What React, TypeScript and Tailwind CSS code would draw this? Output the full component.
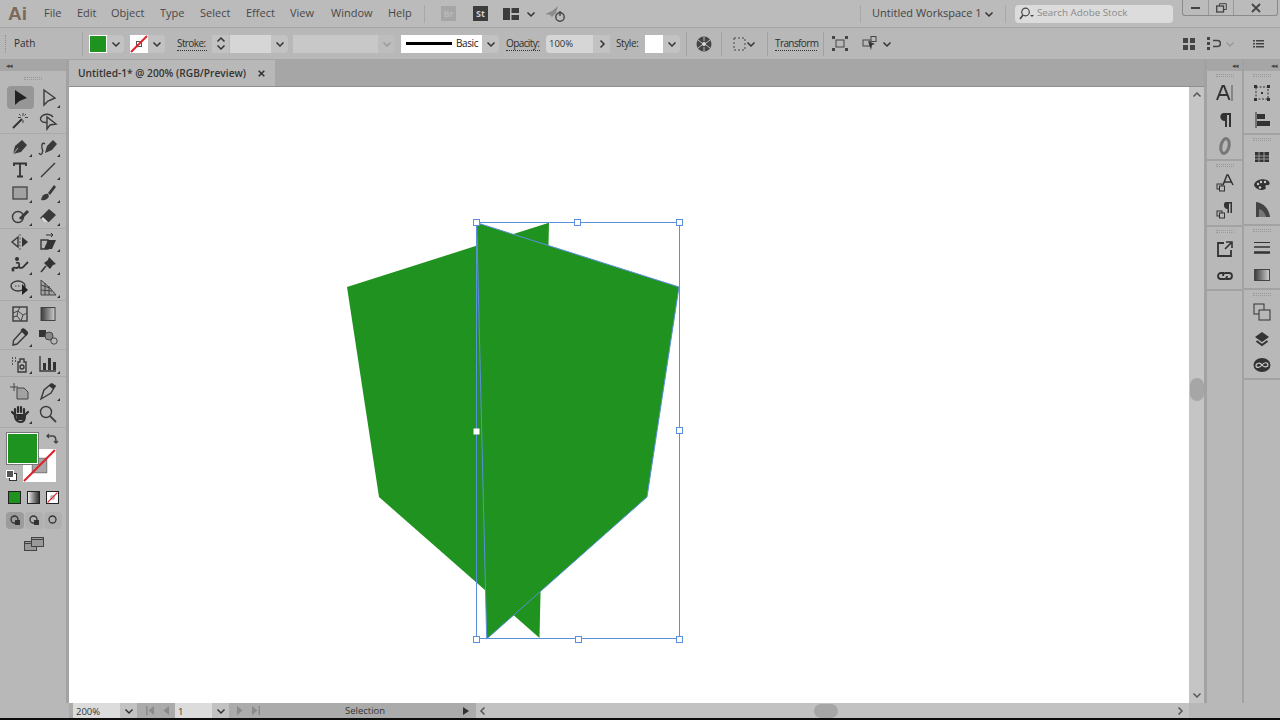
import type { ReactNode } from "react";

const ink = "#3a3a3a";

function Chevron({ dir = "down", color = "#333" }: { dir?: "down" | "up" | "left" | "right"; color?: string }) {
  const d = {
    down: "M1.5 3.5 L5 7 L8.5 3.5",
    up: "M1.5 6.5 L5 3 L8.5 6.5",
    left: "M6.5 1.5 L3 5 L6.5 8.5",
    right: "M3.5 1.5 L7 5 L3.5 8.5",
  }[dir];
  return (
    <svg width="10" height="10" viewBox="0 0 10 10" fill="none">
      <path d={d} stroke={color} strokeWidth="1.5" />
    </svg>
  );
}

function DropBtn({ w = "w-[17px]" }: { w?: string }) {
  return (
    <div className={`${w} h-[18px] bg-[#c2c2c2] rounded-r-sm flex items-center justify-center`}>
      <Chevron />
    </div>
  );
}

function Sep({ ml, mr }: { ml: string; mr: string }) {
  return <div className={`w-px h-[24px] bg-[#a2a2a2] ${ml} ${mr}`} />;
}

function Label({ children, className }: { children: ReactNode; className: string }) {
  return (
    <span className={`text-[10px] tracking-[-0.6px] whitespace-nowrap min-w-0 text-[#2e2e2e] border-b border-dotted border-[#333] leading-[13px] ${className}`}>
      {children}
    </span>
  );
}

function NoStroke({ size = 18 }: { size?: number }) {
  return (
    <svg width={size} height={size} viewBox="0 0 18 18">
      <rect width="18" height="18" fill="#fff" />
      <rect x="6.5" y="6.5" width="5" height="5" fill="none" stroke="#555" />
      <path d="M1 17 L17 1" stroke="#e0202a" strokeWidth="2" />
    </svg>
  );
}

function MenuBar() {
  const items = [
    ["File", "w-[33px]"],
    ["Edit", "w-[34px]"],
    ["Object", "w-[49px]"],
    ["Type", "w-[40px]"],
    ["Select", "w-[46px]"],
    ["Effect", "w-[44px]"],
    ["View", "w-[41px]"],
    ["Window", "w-[57px]"],
    ["Help", "w-[36px]"],
  ];
  return (
    <div className="h-[27px] bg-[#bbbbbb] flex items-center shrink-0">
      <span className="w-[44px] pl-[8px] text-[19px] font-bold text-[#7b6a58] font-['Liberation_Sans',sans-serif] leading-none">Ai</span>
      {items.map(([label, w]) => (
        <span key={label} className={`${w} text-[11px] text-[#484848] -mt-[1px]`}>{label}</span>
      ))}
      <div className="w-px h-[18px] bg-[#a8a8a8]" />
      <div className="w-[15px] h-[15px] ml-[16px] bg-[#a6a6a6] text-[#b8b8b8] text-[9px] font-bold flex items-center justify-center">Br</div>
      <div className="w-[15px] h-[15px] ml-[17px] bg-[#3c3c3c] text-[#d0d0d0] text-[9px] font-bold flex items-center justify-center">St</div>
      <svg className="ml-[15px]" width="16" height="12" viewBox="0 0 16 12">
        <path d="M0 0H7V12H0Z M8.500 0H16V5H8.500Z M8.500 7H16V12H8.500Z" fill="#3c3c3c" />
      </svg>
      <div className="ml-[7px]"><Chevron /></div>
      <svg className="ml-[9px]" width="21" height="18" viewBox="0 0 21 18" fill="none">
        <path d="M0 9 L7 6 L13 1 L11 8 L7 12 L5 10Z" fill="#8c8c8c" />
        <circle cx="15" cy="12" r="4.200" stroke="#444" strokeWidth="1.400" />
        <path d="M15 6 V11" stroke="#444" strokeWidth="1.400" />
      </svg>
      <div className="w-px h-[18px] bg-[#a8a8a8] ml-[294px]" />
      <span className="ml-[11px] w-[105px] text-[11px] text-[#444] whitespace-nowrap">Untitled Workspace 1</span>
      <div className="ml-[7px]"><Chevron /></div>
      <div className="w-px h-[18px] bg-[#a8a8a8] ml-[11px]" />
      <div className="ml-[9px] w-[158px] h-[18px] bg-[#dcdcdc] rounded-sm flex items-center pl-[4px] gap-[1px]">
        <svg width="15" height="13" viewBox="0 0 15 13" fill="none">
          <circle cx="6.500" cy="5" r="3.800" stroke="#444" strokeWidth="1.200" />
          <path d="M4 8 L1 12" stroke="#444" strokeWidth="1.500" />
          <path d="M11 8 H15 L13 10Z" fill="#444" />
        </svg>
        <span className="text-[9.800px] text-[#8a8a8a] whitespace-nowrap ml-[2px]">Search Adobe Stock</span>
      </div>
      <div className="ml-[9px] self-start w-[96px] h-[16px] border border-t-0 border-[#8a8a8a] rounded-b-[3px] flex">
        <div className="w-[26px] flex items-center justify-center border-r border-[#9a9a9a]">
          <div className="w-[9px] h-[2px] bg-[#444]" />
        </div>
        <div className="w-[25px] flex items-center justify-center border-r border-[#9a9a9a]">
          <svg width="11" height="10" viewBox="0 0 11 10" fill="none">
            <path d="M3.500 3V.7H10.300V6.500H7.500" stroke="#444" />
            <rect x=".7" y="3" width="6.800" height="6" stroke="#444" strokeWidth="1.300" />
          </svg>
        </div>
        <div className="flex-1 flex items-center justify-center">
          <svg width="10" height="10" viewBox="0 0 10 10">
            <path d="M1 1 L9 9 M9 1 L1 9" stroke="#444" strokeWidth="1.800" />
          </svg>
        </div>
      </div>
    </div>
  );
}

function ControlBar() {
  return (
    <div className="h-[33px] bg-[#b8b8b8] border-t border-b border-[#a4a4a4] flex items-center shrink-0">
      <div className="ml-[5px] w-px h-[18px] border-l border-dotted border-[#8e8e8e]" />
      <span className="ml-[8px] w-[68px] text-[10px] text-[#2e2e2e]">Path</span>
      <div className="w-px h-[24px] bg-[#a2a2a2]" />
      <div className="ml-[6px] w-[18px] h-[18px] bg-[#1e9320] border border-white" />
      <DropBtn />
      <div className="ml-[6px]"><NoStroke /></div>
      <DropBtn />
      <Label className="ml-[12px] w-[30px]">Stroke:</Label>
      <div className="ml-[5px] w-[17px] h-[18px] bg-[#c2c2c2] flex flex-col items-center justify-center -space-y-[3px]">
        <Chevron dir="up" />
        <Chevron />
      </div>
      <div className="ml-[1px] w-[41px] h-[18px] bg-[#d6d6d6]" />
      <DropBtn />
      <div className="ml-[5px] w-[85px] h-[18px] bg-[#c8c8c8]" />
      <div className="w-[17px] h-[18px] bg-[#bdbdbd] flex items-center justify-center">
        <Chevron color="#999" />
      </div>
      <div className="ml-[6px] w-[81px] h-[18px] bg-white flex items-center pl-[5px]">
        <div className="w-[46px] h-[3px] bg-black shrink-0" />
        <span className="ml-[4px] text-[10px] tracking-[-0.4px] text-[#222]">Basic</span>
      </div>
      <DropBtn />
      <Label className="ml-[7px] w-[34px]">Opacity:</Label>
      <div className="ml-[6px] w-[47px] h-[18px] bg-[#d6d6d6] rounded-l-sm text-[9.500px] text-[#333] pl-[3px] leading-[18px]">100%</div>
      <div className="w-[17px] h-[18px] bg-[#c2c2c2] flex items-center justify-center"><Chevron dir="right" /></div>
      <span className="ml-[6px] w-[23px] text-[10px] tracking-[-0.4px] text-[#2e2e2e]">Style:</span>
      <div className="ml-[6px] w-[18px] h-[18px] bg-white" />
      <DropBtn />
      <Sep ml="ml-[6px]" mr="mr-[9px]" />
      <svg width="16" height="16" viewBox="0 0 16 16">
        <circle cx="8" cy="8" r="7.500" fill="#444" />
        <circle cx="8" cy="8" r="2" fill="#ddd" />
        <path d="M8 1V5 M8 11V15 M2 4L6 7 M10 9L14 12 M14 4L10 7 M6 9L2 12" stroke="#bbb" />
      </svg>
      <Sep ml="ml-[9px]" mr="mr-[11px]" />
      <svg width="13" height="14" viewBox="0 0 13 14" fill="none">
        <rect x="1" y="1" width="11" height="12" stroke="#444" strokeDasharray="2 2" />
        <path d="M6.500 6.500h.01" stroke="#444" strokeWidth="2" />
      </svg>
      <Chevron />
      <Sep ml="ml-[11px]" mr="mr-[7px]" />
      <Label className="w-[42px]">Transform</Label>
      <Sep ml="ml-[6px]" mr="mr-[8px]" />
      <svg width="16" height="15" viewBox="0 0 16 15" fill="none">
        <rect x="4" y="4" width="8" height="7" stroke="#444" />
        <path d="M0 0H3V3H0Z M13 0H16V3H13Z M0 12H3V15H0Z M13 12H16V15H13Z" fill="#444" />
      </svg>
      <svg className="ml-[14px]" width="16" height="15" viewBox="0 0 16 15" fill="none">
        <rect x="1" y="4" width="7" height="6" stroke="#444" />
        <rect x="9" y="0.500" width="5" height="5" stroke="#444" />
        <path d="M6 5 L13 8 L10 9 L9 14Z" fill="#333" />
      </svg>
      <div className="ml-[4px]"><Chevron /></div>
      <svg className="ml-[291px]" width="12" height="12" viewBox="0 0 12 12">
        <path d="M0 0H5V5H0Z M7 0H12V5H7Z M0 7H5V12H0Z M7 7H12V12H7Z" fill="#444" />
      </svg>
      <svg className="ml-[12px]" width="14" height="13" viewBox="0 0 14 13" fill="none">
        <path d="M0 0H3V3H0Z M0 5H3V8H0Z M0 10H3V13H0Z" fill="#444" />
        <path d="M6 3.500H10.500A3 3 0 0 1 10.500 9.500H6" stroke="#444" strokeWidth="1.600" />
      </svg>
      <div className="ml-[4px]"><Chevron color="#999" /></div>
      <svg className="ml-[18px]" width="11" height="8" viewBox="0 0 11 8">
        <path d="M0 0H2V1.500H0Z M3 0H11V1.500H3Z M0 3H2V4.500H0Z M3 3H11V4.500H3Z M0 6H2V7.500H0Z M3 6H11V7.500H3Z" fill="#444" />
      </svg>
    </div>
  );
}

function Slot({ children, fly = false }: { children: ReactNode; fly?: boolean }) {
  return (
    <div className="relative w-[24px] h-[23px] flex items-center justify-center">
      <svg width="20" height="20" viewBox="0 0 20 20" fill="none">{children}</svg>
      {fly && <span className="absolute right-[0px] bottom-[1px] w-0 h-0 border-l-[3px] border-l-transparent border-b-[3px] border-b-[#333]" />}
    </div>
  );
}

function Tools() {
  const s = { stroke: ink, strokeWidth: 1.4 };
  return (
    <div className="w-[66px] h-full bg-[#b8b8b8] border-r-[3px] border-[#a2a2a2] shrink-0 box-content flex flex-col">
      <div className="h-[11px] bg-[#a6a6a6] flex items-center pl-[6px] text-[7px] text-[#444] leading-none tracking-[-1px]">◂◂</div>
      <div className="h-[15px] flex items-center justify-center">
        <div className="w-[18px] h-[3px] border-y border-dotted border-[#999]" />
      </div>
      <div className="pl-[6px] border-b border-[#aaa] pb-[1px] grid grid-cols-[28px_24px] justify-items-center gap-x-[2px]">
        <div className="relative w-[27px] h-[23px] bg-[#969696] rounded-sm flex items-center justify-center">
          <svg width="20" height="20" viewBox="0 0 20 20"><path d="M5 2 V17 L9.500 13 L17 10Z" fill="#222" /></svg>
        </div>
        <Slot fly><path d="M6 2 V17 L10 13 L17 10Z" {...s} /></Slot>
        <Slot>
          <path d="M3 17 L12 8" stroke="#333" strokeWidth="2" />
          <path d="M13 2v3 M13 9v3 M8 6.500h3 M15 6.500h3 M9 3l1.500 1.500 M16 3l-1.500 1.500" stroke="#444" />
        </Slot>
        <Slot>
          <path d="M11 11 C3 13 1 8 4 5 C7 2 13 3 15 6" {...s} />
          <path d="M9 6 V18 L12 14 L18 13Z" fill="#b8b8b8" {...s} />
        </Slot>
      </div>
      <div className="pl-[6px] pt-[1px] border-b border-[#aaa] pb-[1px] grid grid-cols-[28px_24px] justify-items-center gap-x-[2px]">
        <Slot fly>
          <path d="M3 17 L5 9 L12 3 L17 8 L11 15Z" fill="#3a3a3a" />
          <path d="M3 17 L8 11" stroke="#b8b8b8" />
        </Slot>
        <Slot fly>
          <path d="M1 16 C3 20 6 15 4 11 C3 7 5 5 7 7" {...s} />
          <path d="M7 16 L9 9 L15 3 L19 7 L14 13Z" fill="#3a3a3a" />
        </Slot>
        <Slot fly>
          <path d="M4 6 V3.500 H16 V6 M10 3.500 V16.500 M7 16.500 H13" stroke="#333" strokeWidth="1.800" />
        </Slot>
        <Slot fly><path d="M3 17 L17 3" {...s} /></Slot>
        <Slot fly><rect x="3" y="4" width="14" height="12" fill="#a2a2a2" stroke="#444" strokeWidth="1.300" /></Slot>
        <Slot fly>
          <path d="M10 10 L16 2 L18 4 L12 12Z" fill="#3a3a3a" />
          <path d="M3 17 C4 12 7 10 10 11 L11 13 C10 16 7 18 3 17Z" fill="#3a3a3a" />
        </Slot>
        <Slot fly>
          <circle cx="8" cy="11" r="5.500" {...s} />
          <path d="M10 13 L18 5" stroke="#3a3a3a" strokeWidth="3" />
        </Slot>
        <Slot fly>
          <path d="M2 12 L11 3 L18 9 L11 16 H6Z" fill="#3a3a3a" />
          <path d="M5 11 L10 16 L6 16 L3 13Z" fill="#ddd" />
        </Slot>
      </div>
      <div className="pl-[6px] pt-[1px] border-b border-[#aaa] pb-[1px] grid grid-cols-[28px_24px] justify-items-center gap-x-[2px]">
        <Slot>
          <path d="M8 5 L2 10 L8 15Z" {...s} />
          <path d="M12 5 L18 10 L12 15Z" fill="#333" />
          <path d="M10 2 V18" stroke="#555" strokeDasharray="2 1.500" />
        </Slot>
        <Slot fly>
          <path d="M3 8 H10 V17 H3Z" {...s} />
          <path d="M6 17 L10 8 H18 L14 17Z" fill="#333" />
          <path d="M8 3 H15 M13 1 L15 3 L13 5" stroke="#333" />
        </Slot>
        <Slot fly>
          <path d="M2 14 C5 10 7 16 9 11 C10 8 8 7 6 8 M9 12 C12 15 15 10 18 7" stroke="#333" strokeWidth="1.800" />
          <circle cx="3" cy="15" r="1.500" fill="#333" />
          <circle cx="7" cy="4" r="2" fill="#333" />
        </Slot>
        <Slot fly>
          <path d="M11 2 L18 9 L15 10 L12 14 L6 8 L10 5Z" fill="#333" />
          <path d="M8 11 L3 17" stroke="#333" strokeWidth="1.500" />
        </Slot>
        <Slot fly>
          <ellipse cx="8" cy="8" rx="7" ry="5" {...s} />
          <path d="M5 8h6" stroke="#444" strokeDasharray="1.500 1.500" />
          <path d="M12 6 V17 L18 12Z" fill="#222" />
        </Slot>
        <Slot fly>
          <path d="M3 2 V17 H18 L12 10 L3 2Z" fill="#a2a2a2" stroke="#444" />
          <path d="M3 7 L12 10 M3 12 L14 13 M7 5 V17 M11 8 V17" stroke="#444" />
        </Slot>
      </div>
      <div className="pl-[6px] pt-[1px] border-b border-[#aaa] pb-[1px] grid grid-cols-[28px_24px] justify-items-center gap-x-[2px]">
        <Slot>
          <rect x="3" y="3" width="14" height="14" {...s} />
          <path d="M3 9 L8 7 L10 3 M8 7 L13 11 L17 9 M13 11 L11 17 M3 13 L7 12 L11 17 M7 12 L8 7" stroke="#444" />
        </Slot>
        <Slot>
          <defs>
            <linearGradient id="toolgrad" x1="0" x2="1" y1="0" y2="0">
              <stop offset="0" stopColor="#3a3a3a" />
              <stop offset="1" stopColor="#cfcfcf" />
            </linearGradient>
          </defs>
          <rect x="3" y="3.500" width="14" height="13" fill="url(#toolgrad)" stroke="#444" />
        </Slot>
        <Slot fly>
          <path d="M12 4 L16 8 L7 17 L3 18 L3.500 13.500Z" {...s} />
          <path d="M10.500 3 L13 1 L15 2 L18 5 L18 7 L16 9Z" fill="#333" />
        </Slot>
        <Slot>
          <rect x="1" y="3" width="7" height="7" fill="#333" />
          <circle cx="11" cy="9" r="4" fill="#888" stroke="#444" />
          <circle cx="16" cy="14" r="3.200" fill="#b8b8b8" stroke="#444" />
        </Slot>
      </div>
      <div className="pl-[6px] pt-[2px] border-b border-[#aaa] pb-[1px] grid grid-cols-[28px_24px] justify-items-center gap-x-[2px]">
        <Slot fly>
          <path d="M8 8 H10 V5 H14 V8 H16 V18 H8Z" {...s} />
          <circle cx="12" cy="13" r="2" {...s} />
          <path d="M2 4h1 M5 4h1 M2 7h1 M5 7h1 M2 10h1" stroke="#333" strokeWidth="1.500" />
        </Slot>
        <Slot fly>
          <path d="M2 2 V17 H18" {...s} />
          <path d="M5 9H8V16H5Z M10 4H13V16H10Z M15 8H18V16H15Z" fill="#333" />
        </Slot>
      </div>
      <div className="pl-[6px] pt-[2px] border-b border-[#aaa] pb-[2px] grid grid-cols-[28px_24px] justify-items-center gap-x-[2px]">
        <Slot>
          <path d="M7 7 H14 L18 11 V18 H7Z" fill="#a2a2a2" stroke="#444" />
          <path d="M4 2 V10 M0 6 H8" stroke="#444" />
        </Slot>
        <Slot fly>
          <path d="M3 18 L6 9 L13 3 L17 5 L13 12 L8 15Z" {...s} />
          <path d="M11 5 L14 2 L18 5 L15 8Z" fill="#333" />
        </Slot>
        <Slot fly>
          <path d="M5 9 V5 M8 8 V3 M11 8 V3 M14 9 V5 M5 9 V13 C6 17 9 18 11 18 C14 18 15 15 15 11 M15 11 L18 8 M5 11 L2 8" stroke="#2e2e2e" strokeWidth="2.200" strokeLinecap="round" />
          <path d="M6 10H14V16H7Z" fill="#2e2e2e" />
        </Slot>
        <Slot>
          <circle cx="8" cy="8" r="5.500" {...s} />
          <path d="M12 12 L18 18" stroke="#444" strokeWidth="1.800" />
        </Slot>
      </div>
      <div className="pl-[7px] pt-[5px] flex flex-col">
        <div className="relative h-[46px]">
          <div className="w-[31px] h-[31px] bg-[#1e9320] border border-white outline outline-[#777] relative z-10" />
          <svg className="absolute left-[16px] top-[16px]" width="33" height="33" viewBox="0 0 32 32">
            <rect width="32" height="32" fill="#fff" />
            <rect x="9" y="9" width="14" height="14" fill="#a8a8a8" stroke="#777" />
            <path d="M1 31 L31 1" stroke="#e0202a" strokeWidth="2" />
          </svg>
          <svg className="absolute left-[39px] top-[-1px]" width="13" height="13" viewBox="0 0 13 13" fill="none">
            <path d="M1 4 H7 C10 4 10 7 10 11 M3 2 L1 4 L3 6 M8 9 L10 11 L12 9" stroke="#444" strokeWidth="1.300" />
          </svg>
          <svg className="absolute left-[-1px] top-[37px]" width="11" height="11" viewBox="0 0 11 11">
            <rect x="3.500" y="3.500" width="7" height="7" fill="#fff" stroke="#333" />
            <rect x="0.500" y="0.500" width="7" height="7" fill="#555" stroke="#fff" />
          </svg>
        </div>
        <div className="mt-[12px] flex gap-[6px] ml-[1px]">
          <div className="w-[13px] h-[13px] bg-[#1e9320] border border-[#222]" />
          <div className="w-[13px] h-[13px] bg-gradient-to-r from-[#eeeeee] to-[#333] border border-[#222]" />
          <div className="border border-[#222]"><NoStroke size={11} /></div>
        </div>
        <div className="mt-[8px] flex -ml-[1px] gap-[1px]">
          {["bg-[#9c9c9c]", "bg-[#b0b0b0]", "bg-[#b0b0b0]"].map((bg, i) => (
            <div key={i} className={`w-[18px] h-[17px] rounded-sm flex items-center justify-center ${bg}`}>
              <svg width="11" height="11" viewBox="0 0 11 11" fill="none">
                <circle cx="4.500" cy="4.500" r="3.500" stroke="#333" strokeWidth="1.300" />
                <rect x="5" y="5" width="5" height="5" fill={i === 2 ? "none" : "#333"} />
              </svg>
            </div>
          ))}
        </div>
        <svg className="mt-[8px] ml-[17px]" width="20" height="14" viewBox="0 0 20 14">
          <rect x="0.500" y="4.500" width="12" height="9" fill="#999" stroke="#444" />
          <rect x="7.500" y="0.500" width="12" height="9" fill="#999" stroke="#444" />
          <path d="M8 2.500H19 M1 6.500H7" stroke="#444" />
        </svg>
      </div>
    </div>
  );
}

function Canvas() {
  const handles: [number, number][] = [
    [476, 222], [577, 222], [679, 222],
    [679, 430],
    [476, 639], [578, 639], [679, 639],
  ];
  return (
    <svg className="w-full h-full block" viewBox="69 87 1120 616">
      <polygon points="549,222.700 347,287 379,497 539.500,638" fill="#1f9220" />
      <polygon points="476.700,222.700 679,287 647,497 486.700,639" fill="#1f9220" />
      <polyline points="476.700,222.700 679,287 647,497 486.700,639 476.700,222.700" fill="none" stroke="#5b8fdc" strokeWidth="1" />
      <rect x="476.500" y="222.500" width="203" height="416" fill="none" stroke="#5b8fdc" strokeWidth="1" />
      {handles.map(([x, y]) => (
        <rect key={`${x}-${y}`} x={x - 2.500} y={y - 2.500} width="6" height="6" fill="#fff" stroke="#5b8fdc" strokeWidth="1" />
      ))}
      <rect x="473.500" y="428.500" width="6" height="6" fill="#fff" />
    </svg>
  );
}

function Document() {
  return (
    <div className="flex-1 min-w-0 flex flex-col">
      <div className="h-[27px] bg-[#a6a6a6] border-b border-[#8f8f8f] flex shrink-0">
        <div className="w-[206px] bg-[#b8b8b8] flex items-center pl-[9px] pt-[1px]">
          <span className="w-[180px] text-[10.200px] font-semibold text-[#333] whitespace-nowrap">Untitled-1* @ 200% (RGB/Preview)</span>
          <svg width="7" height="7" viewBox="0 0 7 7">
            <path d="M.7 .7 L6.300 6.300 M6.300 .7 L.7 6.300" stroke="#333" strokeWidth="1.600" />
          </svg>
        </div>
      </div>
      <div className="flex-1 min-h-0 flex">
        <div className="flex-1 min-w-0 bg-white">
          <Canvas />
        </div>
        <div className="w-[15px] bg-[#c5c5c5] flex flex-col items-center">
          <div className="mt-[3px]"><Chevron dir="up" color="#555" /></div>
          <div className="mt-[278px] w-[14px] h-[23px] rounded-full bg-[#a6a6a6]" />
          <div className="mt-auto mb-[3px]"><Chevron color="#555" /></div>
        </div>
      </div>
    </div>
  );
}

function SidePanel({ h, children }: { h: string; children?: ReactNode }) {
  return (
    <div className={`${h} border-b-2 border-[#a2a2a2] flex flex-col items-center shrink-0`}>
      <div className="h-[9px] w-full flex items-center justify-center shrink-0">
        <div className="w-[18px] h-[3px] border-y border-dotted border-[#999]" />
      </div>
      {children}
    </div>
  );
}

function Dock({ children }: { children: ReactNode }) {
  return <div className="w-[26px] h-[26.500px] flex items-center justify-center shrink-0"><svg width="18" height="18" viewBox="0 0 18 18" fill="none">{children}</svg></div>;
}

function Panels() {
  return (
    <div className="flex shrink-0 w-[76px] h-full bg-[#b8b8b8]">
      <div className="w-[40px] border-l-[3px] border-r-[2px] border-[#a2a2a2] flex flex-col box-border shrink-0">
        <div className="h-[11px] bg-[#a6a6a6] flex items-center justify-end pr-[4px] text-[7px] text-[#444] leading-none tracking-[-1px] shrink-0">◂◂</div>
        <SidePanel h="h-[90px]">
          <Dock>
            <path d="M1 16 L6.500 2 H8 L13.500 16 M3 11 H11.500" stroke="#333" strokeWidth="2" />
            <path d="M16 1V17" stroke="#555" />
          </Dock>
          <Dock>
            <path d="M8 2H15V16H13V4H11V16H9V10C3 10 3 2 8 2Z" fill="#333" />
          </Dock>
          <Dock>
            <ellipse cx="9" cy="9" rx="4" ry="7.500" transform="rotate(12 9 9)" stroke="#777" strokeWidth="3" />
          </Dock>
        </SidePanel>
        <SidePanel h="h-[66px]">
          <Dock>
            <rect x="1" y="10" width="5" height="5" stroke="#333" />
            <rect x="3.500" y="12" width="5" height="5" fill="#b8b8b8" stroke="#333" />
            <path d="M7 11 L11 1 H12 L17 11 M8.500 8 H15" stroke="#333" strokeWidth="1.500" />
          </Dock>
          <Dock>
            <rect x="1" y="10" width="5" height="5" stroke="#333" />
            <rect x="3.500" y="12" width="5" height="5" fill="#b8b8b8" stroke="#333" />
            <path d="M10 1H16V12H14.500V2.500H13V12H11.500V8C7 8 7 1 10 1Z" fill="#333" />
          </Dock>
        </SidePanel>
        <SidePanel h="h-[64px]">
          <Dock>
            <path d="M8 3H2V16H15V10" stroke="#333" strokeWidth="1.800" />
            <path d="M10 2H16V8 M16 2L9 9" stroke="#333" strokeWidth="1.600" />
          </Dock>
          <Dock>
            <path d="M8 6H5A3 3 0 0 0 5 12H9A3 3 0 0 0 11 9 M10 12H13A3 3 0 0 0 13 6H9A3 3 0 0 0 7 9" stroke="#333" strokeWidth="1.800" />
          </Dock>
        </SidePanel>
      </div>
      <div className="flex-1 flex flex-col">
        <div className="h-[11px] bg-[#a6a6a6] flex items-center justify-end pr-[3px] text-[7px] text-[#444] leading-none tracking-[-1px] shrink-0">◂◂</div>
        <SidePanel h="h-[64px]">
          <Dock>
            <rect x="3" y="3" width="12" height="12" stroke="#333" strokeDasharray="2 1.500" />
            <path d="M1 1H4V4H1Z M14 1H17V4H14Z M1 14H4V17H1Z M14 14H17V17H14Z M8 8H10V10H8Z" fill="#333" />
          </Dock>
          <Dock>
            <path d="M3 1V17" stroke="#333" />
            <path d="M4 3H12V8H4Z M4 10H17V15H4Z" fill="#333" />
          </Dock>
        </SidePanel>
        <SidePanel h="h-[91px]">
          <Dock>
            <path d="M2 4H16V14H2Z" fill="#333" />
            <path d="M2 8H16 M2 11H16 M6 4V14 M11 4V14" stroke="#999" />
          </Dock>
          <Dock>
            <path d="M1 10C2 5 9 3 14 5C18 7 17 11 14 10C12 10 12 12 13 13C12 16 3 16 1 10Z" fill="#333" />
            <circle cx="5" cy="9" r="1.200" fill="#ccc" />
            <circle cx="8" cy="7" r="1.200" fill="#ccc" />
            <circle cx="12" cy="7" r="1.200" fill="#ccc" />
            <circle cx="7" cy="12.500" r="1.200" fill="#ccc" />
          </Dock>
          <Dock>
            <path d="M3 1V16H17C16 8 11 2 3 1Z" fill="#444" />
            <path d="M6 16V8C10 9 12 12 13 16Z" fill="#777" />
          </Dock>
        </SidePanel>
        <SidePanel h="h-[64px]">
          <Dock>
            <path d="M1 3.500H17" stroke="#333" />
            <path d="M1 8H17" stroke="#333" strokeWidth="1.500" />
            <path d="M1 13.500H17" stroke="#333" strokeWidth="2.500" />
          </Dock>
          <Dock>
            <rect x="1.500" y="3.500" width="15" height="11" fill="url(#toolgrad)" stroke="#444" />
          </Dock>
        </SidePanel>
        <SidePanel h="h-[90px]">
          <Dock>
            <rect x="1" y="1" width="10" height="10" stroke="#333" />
            <rect x="6" y="7" width="11" height="10" fill="#b8b8b8" stroke="#333" />
          </Dock>
          <Dock>
            <path d="M9 2L16 7L9 12L2 7Z" fill="#333" />
            <path d="M3.500 11L9 15L14.500 11" stroke="#333" strokeWidth="2" />
          </Dock>
          <Dock>
            <ellipse cx="9" cy="9" rx="8.500" ry="7" fill="#333" />
            <path d="M3 10C3 7 7 6 9 9C11 12 15 11 15 9C15 6 11 6 9 9C7 12 3 12 3 10Z" stroke="#ccc" strokeWidth="1.200" />
          </Dock>
        </SidePanel>
      </div>
    </div>
  );
}

function NavIcon({ flip = false, bar = false }: { flip?: boolean; bar?: boolean }) {
  return (
    <svg className={flip ? "-scale-x-100" : ""} width="10" height="9" viewBox="0 0 10 9">
      {bar && <path d="M1 0H2.500V9H1Z" fill="#8a8a8a" />}
      <path d="M9 0V9L3.500 4.500Z" fill="#8a8a8a" />
    </svg>
  );
}

function StatusBar() {
  return (
    <div className="h-[17px] shrink-0 flex flex-col">
      <div className="h-[15px] bg-[#b8b8b8] flex">
        <div className="w-[69px] shrink-0" />
        <div className="w-[1120px] bg-[#ababab] flex items-center shrink-0">
          <div className="ml-[4px] w-[47px] h-[15px] bg-[#dcdcdc] text-[9.500px] text-[#333] pl-[3px] leading-[17px]">200%</div>
          <div className="w-[17px] h-[15px] bg-[#c2c2c2] flex items-center justify-center"><Chevron /></div>
          <div className="ml-[8px] w-[30px] flex gap-[5px]">
            <NavIcon bar />
            <NavIcon />
          </div>
          <div className="w-[37px] h-[15px] bg-[#dcdcdc] text-[9.500px] text-[#333] pl-[3px] leading-[17px]">1</div>
          <div className="w-[17px] h-[15px] bg-[#c2c2c2] flex items-center justify-center"><Chevron /></div>
          <div className="ml-[7px] w-[40px] flex gap-[5px]">
            <NavIcon flip />
            <NavIcon flip bar />
          </div>
          <span className="ml-[69px] w-[119px] text-[9.500px] text-[#333] leading-[17px]">Selection</span>
          <svg className="-ml-[1px]" width="6" height="8" viewBox="0 0 6 8"><path d="M0 0L6 4L0 8Z" fill="#333" /></svg>
          <div className="ml-[7px] h-[15px] flex-1 bg-[#c2c2c2] flex items-center pl-[2px]">
            <Chevron dir="left" color="#555" />
            <div className="ml-[326px] w-[24px] h-[14px] rounded-full bg-[#a6a6a6]" />
            <div className="ml-auto mr-[4px]"><Chevron dir="right" color="#555" /></div>
          </div>
        </div>
        <div className="flex-1 bg-[#b8b8b8]" />
      </div>
      <div className="flex-1 bg-[#0c0c0c]" />
    </div>
  );
}

export default function App() {
  return (
    <div className="w-[1280px] h-[720px] overflow-hidden flex flex-col bg-[#b8b8b8] font-['Open_Sans',sans-serif]">
      <MenuBar />
      <ControlBar />
      <div className="flex-1 min-h-0 flex">
        <Tools />
        <Document />
        <Panels />
      </div>
      <StatusBar />
    </div>
  );
}
